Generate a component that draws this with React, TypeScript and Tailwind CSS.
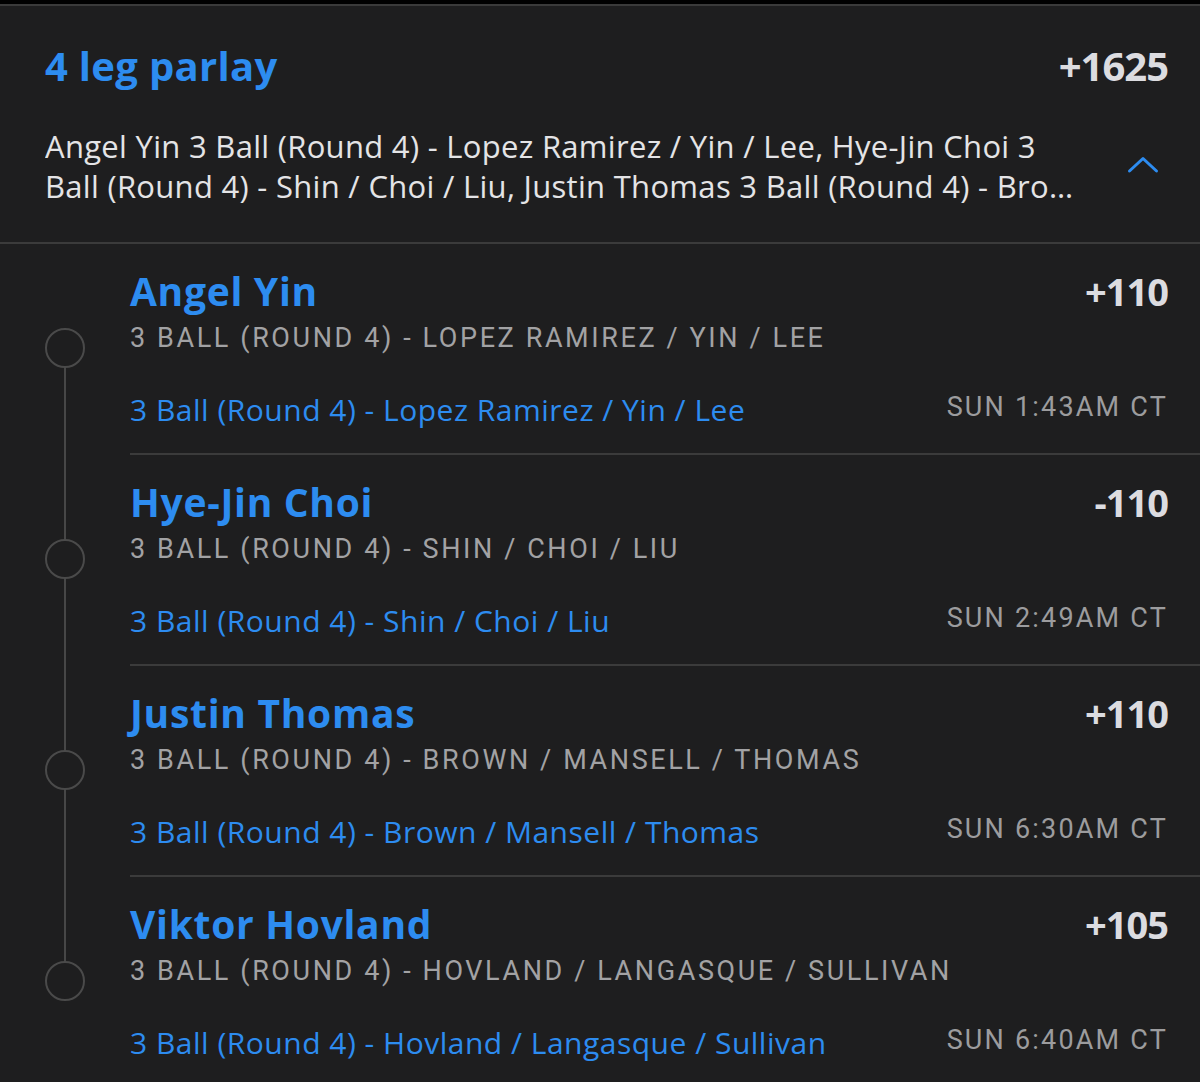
import React from "react";

const legs = [
  {
    name: "Angel Yin",
    odds: "+110",
    market: "3 Ball (Round 4) - Lopez Ramirez / Yin / Lee",
    time: "SUN 1:43AM CT",
  },
  {
    name: "Hye-Jin Choi",
    odds: "-110",
    market: "3 Ball (Round 4) - Shin / Choi / Liu",
    time: "SUN 2:49AM CT",
  },
  {
    name: "Justin Thomas",
    odds: "+110",
    market: "3 Ball (Round 4) - Brown / Mansell / Thomas",
    time: "SUN 6:30AM CT",
  },
  {
    name: "Viktor Hovland",
    odds: "+105",
    market: "3 Ball (Round 4) - Hovland / Langasque / Sullivan",
    time: "SUN 6:40AM CT",
  },
];

const description = legs
  .map((l) => `${l.name} ${l.market}`)
  .join(", ");

const Leg = ({ leg, first, last }: { leg: (typeof legs)[number]; first: boolean; last: boolean }) => {
  return (
    <div className="flex">
      {/* timeline */}
      <div className="w-[130px] flex flex-col items-center shrink-0">
        <div className={`w-[2px] h-[84px] ${first ? "" : "bg-[#474747]"}`} />
        <div className="w-10 h-10 rounded-full border-2 border-[#4a4a4a] shrink-0" />
        <div className={`w-[2px] flex-1 ${last ? "" : "bg-[#474747]"}`} />
      </div>

      <div className="flex-1 border-b-2 border-[#3b3b3b] pt-[26px] pb-[25px] pr-[32px]">
        <div className="flex justify-between items-start">
          <div className="text-[39px] leading-[42px] font-bold text-[#2d8cf0] font-['Open_Sans'] tracking-[0.7px]">
            {leg.name}
          </div>
          <div className="text-[38px] leading-[42px] font-bold text-[#dcdce0] font-['Open_Sans'] tracking-[-1px]">
            {leg.odds}
          </div>
        </div>
        <div className="mt-[10px] text-[27px] leading-[32px] tracking-[2.6px] text-[#a2a2a4] font-['Roboto'] uppercase">
          {leg.market}
        </div>
        <div className="mt-[38px] flex justify-between items-start">
          <div className="text-[30px] leading-[36px] text-[#2d8cf0] font-['Open_Sans'] tracking-[0.5px]">
            {leg.market}
          </div>
          <div className="mt-[-1px] text-[27px] leading-[32px] tracking-[2.2px] text-[#9c9c9e] font-['Roboto']">
            {leg.time}
          </div>
        </div>
      </div>
    </div>
  );
};

export default function App() {
  return (
    <div className="w-[1200px] h-[1082px] overflow-hidden bg-[#1e1e1f]">
      <div className="h-1 bg-black" />
      <div className="h-[2px] bg-[#3a3a3a]" />

      {/* header */}
      <div className="border-b-2 border-[#3b3b3b] pl-[45px] pr-[32px] pt-[38px] pb-[36px]">
        <div className="flex justify-between items-start">
          <div className="text-[40px] leading-[44px] font-bold text-[#2d8cf0] font-['Open_Sans'] tracking-[0.3px]">
            4 leg parlay
          </div>
          <div className="text-[40px] leading-[44px] font-bold text-[#dcdce0] font-['Open_Sans'] tracking-[-1px]">
            +1625
          </div>
        </div>
        <div className="mt-[38px] flex items-center justify-between">
          <div className="w-[1050px] text-[31px] leading-[40px] text-[#e4e4e6] font-['Open_Sans'] tracking-[0.3px] line-clamp-2">
            {description}
          </div>
          <svg width="30" height="15" viewBox="0 0 30 15" className="mr-[10px] mt-[-4px] overflow-visible" fill="none">
            <polyline
              points="1.5,14 15,1.5 28.5,14"
              stroke="#2d8cf0"
              strokeWidth="3"
              strokeLinecap="round"
              strokeLinejoin="round"
            />
          </svg>
        </div>
      </div>

      {legs.map((leg, i) => (
        <Leg key={leg.name} leg={leg} first={i === 0} last={i === legs.length - 1} />
      ))}
    </div>
  );
}
